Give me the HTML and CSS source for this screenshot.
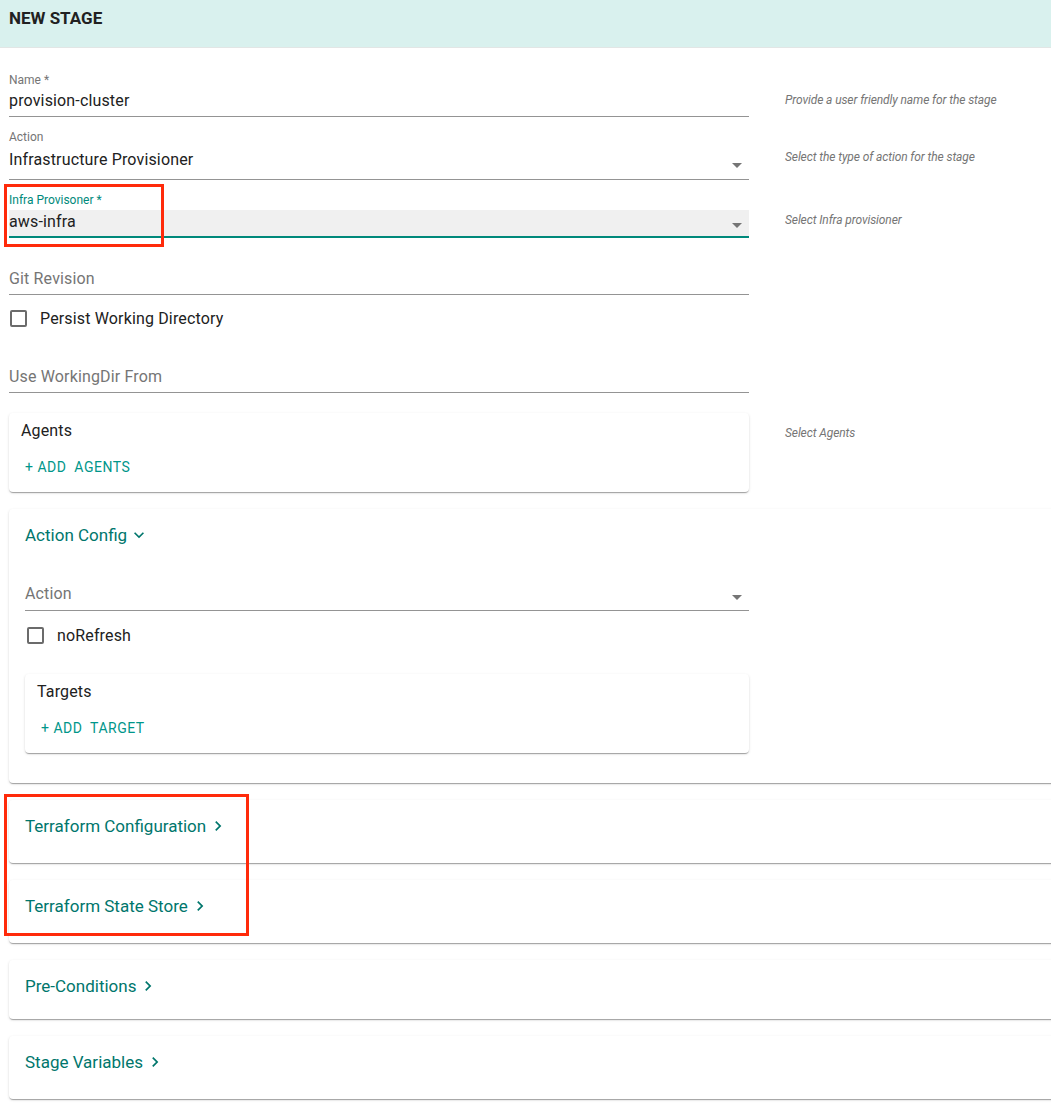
FILE: index.html
```html
<!DOCTYPE html>
<html lang="en">
<head>
    <meta charset="UTF-8">
    <title>New Stage</title>
    <link rel="stylesheet" href="styles.css">
</head>
<body>
    <div class="page">
        <div class="stage-header">NEW STAGE</div>

        <div class="stage-form">
            <div class="row">
                <div class="field">
                    <label class="field-label">Name *</label>
                    <div class="field-input">provision-cluster</div>
                </div>
                <div class="helper">Provide a user friendly name for the stage</div>
            </div>

            <div class="row">
                <div class="field field-select">
                    <label class="field-label">Action</label>
                    <div class="field-input">Infrastructure Provisioner
                        <svg class="drop-arrow" viewBox="0 0 24 24"><path d="M7 10l5 5 5-5z"/></svg>
                    </div>
                </div>
                <div class="helper">Select the type of action for the stage</div>
            </div>

            <div class="row">
                <div class="field field-focused">
                    <label class="field-label">Infra Provisoner *</label>
                    <div class="field-input">aws-infra
                        <svg class="drop-arrow" viewBox="0 0 24 24"><path d="M7 10l5 5 5-5z"/></svg>
                    </div>
                </div>
                <div class="helper">Select Infra provisioner</div>
            </div>

            <div class="row">
                <div class="field">
                    <label class="field-label"></label>
                    <div class="field-input placeholder">Git Revision</div>
                </div>
            </div>

            <div class="check-row">
                <span class="check-box"></span>
                <span>Persist Working Directory</span>
            </div>

            <div class="row">
                <div class="field field-gap">
                    <label class="field-label"></label>
                    <div class="field-input placeholder">Use WorkingDir From</div>
                </div>
            </div>

            <div class="row row-card">
                <div class="list-card">
                    <div class="list-card-title">Agents</div>
                    <div class="add-btn">+ ADD&nbsp; AGENTS</div>
                </div>
                <div class="helper helper-card">Select Agents</div>
            </div>
        </div>

        <div class="panel panel-open">
            <div class="panel-title">Action Config
                <svg class="chevron" viewBox="0 0 24 24"><path d="M16.59 8.59L12 13.17 7.41 8.59 6 10l6 6 6-6z"/></svg>
            </div>
            <div class="panel-body">
                <div class="field field-select">
                    <label class="field-label"></label>
                    <div class="field-input placeholder">Action
                        <svg class="drop-arrow" viewBox="0 0 24 24"><path d="M7 10l5 5 5-5z"/></svg>
                    </div>
                </div>
                <div class="check-row check-row-panel">
                    <span class="check-box"></span>
                    <span>noRefresh</span>
                </div>
                <div class="list-card list-card-inner">
                    <div class="list-card-title">Targets</div>
                    <div class="add-btn">+ ADD&nbsp; TARGET</div>
                </div>
            </div>
        </div>

        <div class="panel">
            <div class="panel-title">Terraform Configuration
                <svg class="chevron" viewBox="0 0 24 24"><path d="M10 6L8.59 7.41 13.17 12l-4.58 4.59L10 18l6-6z"/></svg>
            </div>
        </div>

        <div class="panel">
            <div class="panel-title">Terraform State Store
                <svg class="chevron" viewBox="0 0 24 24"><path d="M10 6L8.59 7.41 13.17 12l-4.58 4.59L10 18l6-6z"/></svg>
            </div>
        </div>

        <div class="panel panel-short">
            <div class="panel-title">Pre-Conditions
                <svg class="chevron" viewBox="0 0 24 24"><path d="M10 6L8.59 7.41 13.17 12l-4.58 4.59L10 18l6-6z"/></svg>
            </div>
        </div>

        <div class="panel">
            <div class="panel-title">Stage Variables
                <svg class="chevron" viewBox="0 0 24 24"><path d="M10 6L8.59 7.41 13.17 12l-4.58 4.59L10 18l6-6z"/></svg>
            </div>
        </div>

        <!-- annotation boxes drawn over the screenshot -->
        <div class="mark mark-infra"></div>
        <div class="mark mark-terraform"></div>
    </div>
</body>
</html>
```

FILE: styles.css
```css
* {
    margin: 0;
    padding: 0;
    box-sizing: border-box;
}

:root {
    --teal-dark: #00766c;
    --teal: #00897b;
    --text: #212121;
    --muted: #757575;
    --line: #949494;
}

body {
    font-family: Roboto, 'Noto Sans', sans-serif;
    background: #ffffff;
    color: var(--text);
    overflow-x: hidden;
}

.page {
    position: relative;
    min-height: 1120px;
}

.stage-header {
    height: 48px;
    padding: 8px 9px 0;
    background: #d9f1ee;
    border-bottom: 1px solid #e2e6e5;
    font-size: 17px;
    line-height: 20px;
    font-weight: 700;
}

.stage-form {
    padding: 25px 9px 0;
}

.row {
    display: grid;
    grid-template-columns: 740px 1fr;
    column-gap: 36px;
    margin-bottom: 13px;
}

.helper {
    padding-top: 20px;
    font-size: 12px;
    line-height: 14px;
    font-style: italic;
    letter-spacing: -0.1px;
    color: var(--muted);
}

.helper-card {
    padding-top: 13px;
}

/* text field */
.field-label {
    display: block;
    height: 14px;
    font-size: 12px;
    line-height: 14px;
    color: var(--muted);
}

.field-input {
    position: relative;
    padding: 3px 0 4px;
    font-size: 16px;
    line-height: 22px;
    letter-spacing: 0.15px;
    border-bottom: 1px solid var(--line);
}

.field-select .field-input {
    padding: 5px 0 8px;
}

.field-focused .field-label {
    color: var(--teal);
}

.field-focused .field-input {
    margin-top: 3px;
    padding: 1px 0 3px;
    background: #f0f0f0;
    border-bottom: 2px solid var(--teal);
}

.placeholder {
    color: var(--muted);
}

.drop-arrow {
    position: absolute;
    right: 0;
    top: 50%;
    width: 24px;
    height: 24px;
    margin-top: -10px;
    fill: var(--muted);
}

.field-select .drop-arrow {
    margin-top: -9px;
}

/* checkbox */
.check-row {
    display: flex;
    align-items: center;
    gap: 13px;
    height: 36px;
    margin: -8px 0 0 1px;
    font-size: 16px;
    letter-spacing: 0.15px;
}

.check-box {
    width: 17px;
    height: 17px;
    border: 2px solid #6b6b6b;
    border-radius: 2px;
}

.field-gap {
    margin-top: 13px;
}

/* list cards */
.row-card {
    margin-top: 20px;
    margin-bottom: 17px;
}

.list-card {
    height: 79px;
    padding: 6px 12px 0;
    background: #ffffff;
    border-radius: 4px;
    box-shadow: 0 2px 1px -1px rgba(0, 0, 0, 0.2),
                0 1px 1px 0 rgba(0, 0, 0, 0.14),
                0 1px 3px 0 rgba(0, 0, 0, 0.12);
}

.list-card-title {
    font-size: 16px;
    line-height: 24px;
    letter-spacing: 0.15px;
}

.add-btn {
    margin-top: 6px;
    padding-left: 4px;
    font-size: 14px;
    line-height: 36px;
    letter-spacing: 0.5px;
    color: #00968a;
}

/* expansion panels */
.panel {
    margin: 0 -12px 17px 9px;
    padding: 14px 16px 25px;
    background: #ffffff;
    border-radius: 4px;
    box-shadow: 0 2px 1px -1px rgba(0, 0, 0, 0.2),
                0 1px 1px 0 rgba(0, 0, 0, 0.14),
                0 1px 3px 0 rgba(0, 0, 0, 0.12);
}

.panel-short {
    padding-bottom: 21px;
}

.panel-open {
    padding-bottom: 30px;
}

.panel-title {
    display: flex;
    align-items: center;
    gap: 2px;
    font-size: 17px;
    line-height: 24px;
    color: var(--teal-dark);
}

.chevron {
    width: 20px;
    height: 20px;
    fill: var(--teal-dark);
}

.panel-body {
    width: 724px;
    padding-top: 16px;
}

.panel-body .field-select .field-input {
    padding: 6px 0 5px;
}

.check-row-panel {
    margin: 6px 0 0 2px;
}

.list-card-inner {
    margin-top: 21px;
}

/* red annotation rectangles */
.mark {
    position: absolute;
    border: 3px solid #ff2a0a;
}

.mark-infra {
    left: 4px;
    top: 184px;
    width: 160px;
    height: 63px;
}

.mark-terraform {
    left: 4px;
    top: 794px;
    width: 245px;
    height: 142px;
}
```
